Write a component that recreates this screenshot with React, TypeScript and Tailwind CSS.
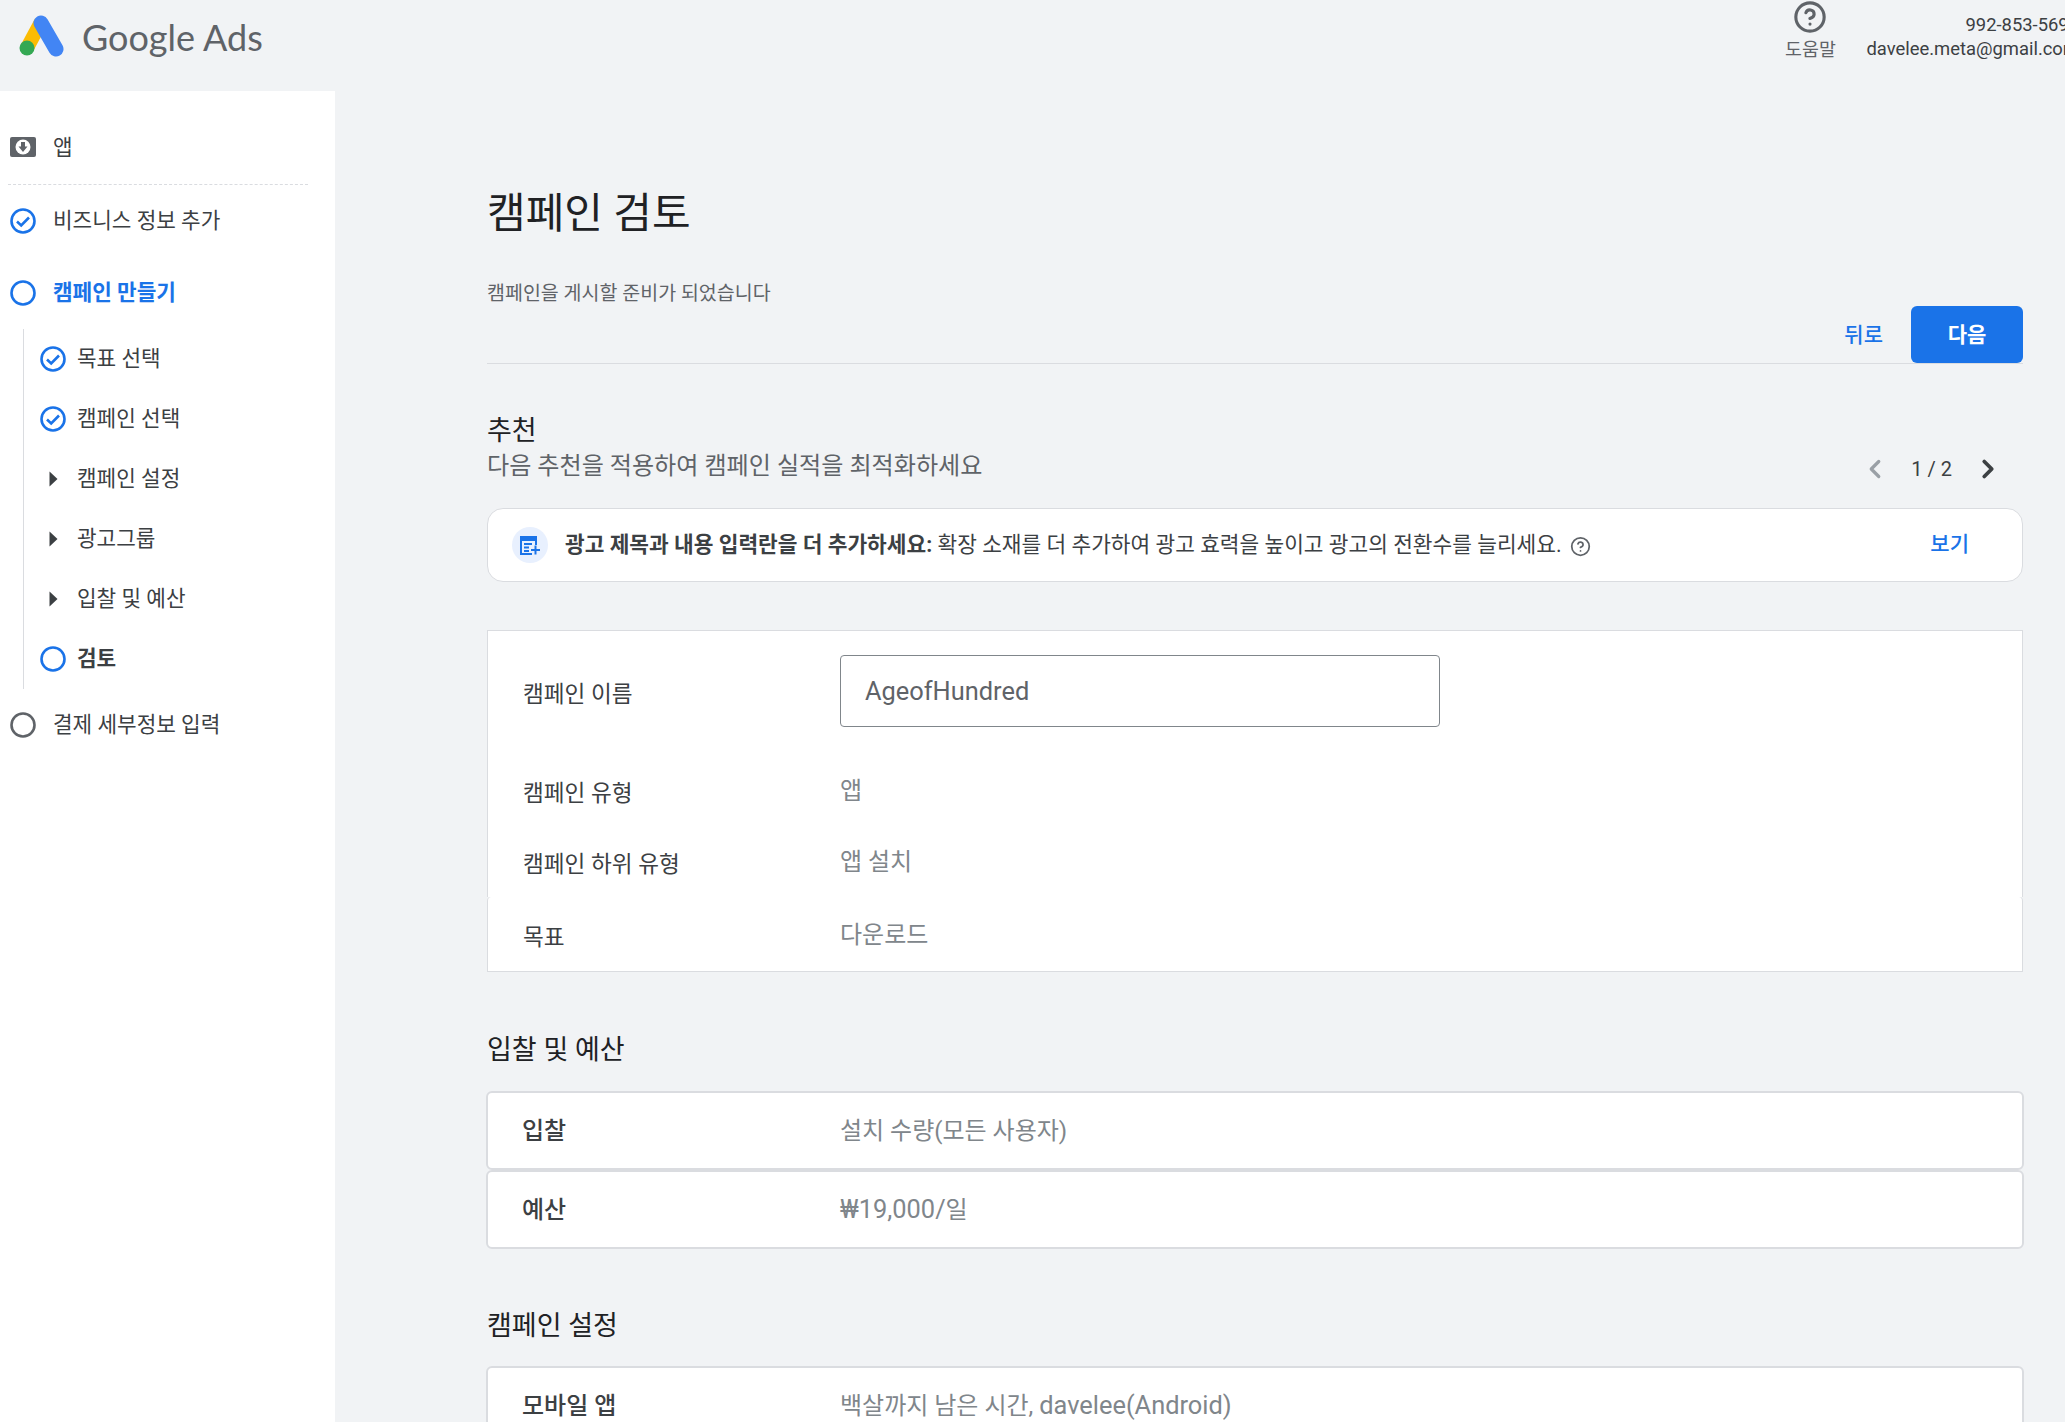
import { ChevronLeft, ChevronRight, CircleHelp } from 'lucide-react'

const BLUE = '#1a73e8'

function CheckRing() {
  return (
    <svg width="26" height="26" viewBox="0 0 26 26" fill="none">
      <circle cx="13" cy="13" r="11.5" stroke={BLUE} strokeWidth="2.6" />
      <path d="M7 13.5l4.2 4 7.8-8" stroke={BLUE} strokeWidth="2.6" />
    </svg>
  )
}

function Ring({ color = BLUE }: { color?: string }) {
  return (
    <svg width="26" height="26" viewBox="0 0 26 26" fill="none">
      <circle cx="13" cy="13" r="11.5" stroke={color} strokeWidth="2.6" />
    </svg>
  )
}

function Caret() {
  return (
    <svg width="26" height="18" viewBox="0 0 26 18">
      <path d="M9.5 1.5l8 7.5-8 7.5z" fill="#3c4043" />
    </svg>
  )
}

function GoogleAdsLogo() {
  return (
    <svg width="66" height="60" viewBox="0 0 66 60" fill="none" className="shrink-0">
      <path d="M41 22L27 48" stroke="#fbbc04" strokeWidth="14" />
      <path d="M41 23L56 49" stroke="#4285f4" strokeWidth="15" strokeLinecap="round" />
      <circle cx="27" cy="48" r="7.5" fill="#34a853" />
    </svg>
  )
}

function AppIcon() {
  return (
    <svg width="26" height="20" viewBox="0 0 26 20">
      <rect width="26" height="20" rx="2" fill="#5f6368" />
      <circle cx="13" cy="10" r="7.5" fill="#fff" />
      <path d="M11 5h4v4.5h2.5L13 15 8.5 9.5H11z" fill="#5f6368" />
    </svg>
  )
}

function SideStep({ icon, label, className = '' }: { icon: React.ReactNode; label: string; className?: string }) {
  return (
    <div className="flex h-[60px] items-center">
      <div className="flex w-[26px] shrink-0 justify-center">{icon}</div>
      <span className={`ml-[11px] text-[21.3px] text-[#3c4043] ${className}`}>{label}</span>
    </div>
  )
}

function Sidebar() {
  return (
    <aside className="h-[1331px] w-[335px] shrink-0 bg-white pl-[10px]">
      <div className="flex h-[56px] items-center pt-[56px]">
        <AppIcon />
        <span className="ml-[17px] pt-[2px] text-[21.3px] text-[#3c4043]">앱</span>
      </div>
      <div className="mt-[37px] w-[300px] -translate-x-[2px] border-t border-dashed border-[#dadce0]" />
      <div className="mt-[11px] flex h-[50px] items-center">
        <CheckRing />
        <span className="ml-[17px] text-[21.3px] text-[#3c4043]">비즈니스 정보 추가</span>
      </div>
      <div className="mt-[22px] flex h-[50px] items-center">
        <Ring />
        <span className="ml-[17px] text-[21.3px] font-bold text-[#1a73e8]">캠페인 만들기</span>
      </div>
      <div className="ml-[13px] mt-[12px] h-[360px] border-l border-[#dadce0] pl-[16px]">
        <div className="-mt-[1px]">
          <SideStep icon={<CheckRing />} label="목표 선택" />
          <SideStep icon={<CheckRing />} label="캠페인 선택" />
          <SideStep icon={<Caret />} label="캠페인 설정" />
          <SideStep icon={<Caret />} label="광고그룹" />
          <SideStep icon={<Caret />} label="입찰 및 예산" />
          <SideStep icon={<Ring />} label="검토" className="font-bold" />
        </div>
      </div>
      <div className="mt-[11px] flex h-[50px] items-center">
        <Ring color="#5f6368" />
        <span className="ml-[17px] text-[21.3px] text-[#3c4043]">결제 세부정보 입력</span>
      </div>
    </aside>
  )
}

function InfoRow({ label, value, height = 'h-[72px]' }: { label: string; value: string; height?: string }) {
  return (
    <div className={`flex items-center pl-[35px] ${height}`}>
      <span className="w-[317px] pt-[5px] text-[22.6px] text-[#3c4043]">{label}</span>
      <span className="text-[24px] text-[#80868b]">{value}</span>
    </div>
  )
}

function SummaryCard({ label, value }: { label: string; value: React.ReactNode }) {
  return (
    <div className="-mx-px flex h-[79px] items-center rounded-[6px] border-2 border-[#dadce0] bg-white pl-[34px]">
      <span className="w-[318px] text-[24px] font-medium text-[#3c4043]">{label}</span>
      <span className="text-[24px] text-[#80868b]">{value}</span>
    </div>
  )
}

export default function App() {
  return (
    <div className="h-[1422px] w-[2065px] overflow-hidden bg-[#f1f3f5] font-['Roboto','Noto_Sans_CJK_KR',sans-serif]">
      <header className="relative flex h-[91px] items-start">
        <GoogleAdsLogo />
        <span className="ml-[16px] mt-[12px] font-['Lato','Noto_Sans',sans-serif] text-[36px] leading-[50px] text-[#5f6368]">
          Google Ads
        </span>
        <div className="ml-auto mr-[-14px] flex">
          <div className="flex w-[60px] flex-col items-center">
            <CircleHelp size={34} strokeWidth={2.2} color="#5f6368" />
            <span className="mt-[4px] text-[18.4px] leading-[24px] text-[#5f6368]">도움말</span>
          </div>
          <div className="ml-[26px] pt-[13px] text-right text-[18.4px] leading-[24px] text-[#3c4043]">
            <div>992-853-5690</div>
            <div>davelee.meta@gmail.com</div>
          </div>
        </div>
      </header>

      <div className="flex">
        <Sidebar />
        <main className="ml-[152px] w-[1536px] shrink-0">
          <h1 className="mt-[93px] text-[42px] leading-[60px] text-[#202124]">캠페인 검토</h1>
          <p className="mt-[36px] text-[19.5px] leading-[28px] text-[#5f6368]">캠페인을 게시할 준비가 되었습니다</p>

          <div className="-mt-[2px] flex h-[58px] items-center justify-end border-b border-[#dadce0]">
            <button className="mr-[28px] pt-[3px] text-[21px] font-medium text-[#1a73e8]">뒤로</button>
            <button className="h-[57px] w-[112px] rounded-[6px] bg-[#1a73e8] pt-[2px] text-[21px] font-bold text-white">다음</button>
          </div>

          <section className="mt-[47px] flex items-end justify-between">
            <div>
              <h2 className="pt-[1px] text-[27px] leading-[38px] text-[#202124]">추천</h2>
              <p className="-mt-[2px] text-[24.1px] leading-[36px] text-[#5f6368]">다음 추천을 적용하여 캠페인 실적을 최적화하세요</p>
            </div>
            <div className="mr-[20px] flex items-center text-[20px] text-[#3c4043]">
              <ChevronLeft size={30} strokeWidth={2.6} color="#9aa0a6" />
              <span className="ml-[21px] mr-[21px]">1 / 2</span>
              <ChevronRight size={30} strokeWidth={3} color="#3c4043" />
            </div>
          </section>

          <div className="mt-[24px] flex h-[74px] items-center rounded-[16px] border border-[#dadce0] bg-white pl-[24px]">
            <div className="flex h-[36px] w-[36px] shrink-0 items-center justify-center rounded-full bg-[#e8f0fe]">
              <svg width="22" height="20" viewBox="0 0 22 20" fill="none">
                <path d="M1 1h17v5H1z" fill={BLUE} />
                <path d="M2 5v14h11M17 5v5" stroke={BLUE} strokeWidth="2" />
                <path d="M5 9h8M5 12.5h5M5 16h5M12 15h9M16.5 10.5v9" stroke={BLUE} strokeWidth="2" />
              </svg>
            </div>
            <p className="ml-[17px] text-[21.4px] leading-[28px] text-[#3c4043]">
              <span className="font-bold">광고 제목과 내용 입력란을 더 추가하세요:</span> 확장 소재를 더 추가하여 광고 효력을 높이고 광고의 전환수를 늘리세요.
            </p>
            <CircleHelp size={21} strokeWidth={2} color="#5f6368" className="ml-[8px] mt-[3px]" />
            <button className="ml-auto mr-[53px] text-[21px] font-medium text-[#1a73e8]">보기</button>
          </div>

          <section className="mt-[48px]">
            <div className="border-x border-t border-[#dadce0] bg-white">
              <div className="flex items-center pl-[35px] pt-[24px]">
                <span className="w-[317px] pt-[8px] text-[22.6px] text-[#3c4043]">캠페인 이름</span>
                <div className="flex h-[72px] w-[600px] items-center rounded-[4px] border border-[#80868b] pl-[24px] text-[25.4px] text-[#5f6368]">
                  AgeofHundred
                </div>
              </div>
              <div className="mt-[28px]">
                <InfoRow label="캠페인 유형" value="앱" />
                <InfoRow label="캠페인 하위 유형" value="앱 설치" height="h-[70px]" />
              </div>
            </div>
            <div className="rounded-t-[4px] border-x border-b border-[#dadce0] bg-white pt-[2px]">
              <InfoRow label="목표" value="다운로드" />
            </div>
          </section>

          <h2 className="mt-[59px] text-[27px] leading-[38px] text-[#202124]">입찰 및 예산</h2>
          <div className="mt-[22px]">
            <SummaryCard label="입찰" value="설치 수량(모든 사용자)" />
            <SummaryCard label="예산" value={<span className="text-[25.4px]">₩19,000/<span className="text-[24px]">일</span></span>} />
          </div>

          <h2 className="mt-[58px] text-[27px] leading-[38px] text-[#202124]">캠페인 설정</h2>
          <div className="mt-[21px]">
            <SummaryCard label="모바일 앱" value={<>백살까지 남은 시간, <span className="text-[25.4px]">davelee(Android)</span></>} />
          </div>
        </main>
      </div>
    </div>
  )
}
